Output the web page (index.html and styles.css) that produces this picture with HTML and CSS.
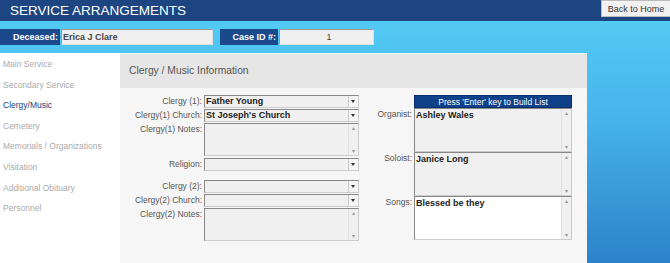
FILE: index.html
```html
<!DOCTYPE html>
<html lang="en">
<head>
    <meta charset="UTF-8">
    <meta name="viewport" content="width=device-width, initial-scale=1.0">
    <title>Service Arrangements</title>
    <link rel="stylesheet" href="styles.css">
</head>
<body>
    <header class="topbar">
        <h1>SERVICE ARRANGEMENTS</h1>
        <button class="home-btn">Back to Home</button>
    </header>
    <div class="page">
        <div class="case-bar">
            <span class="tag">Deceased:</span>
            <span class="field name-field">Erica J Clare</span>
            <span class="tag case-tag">Case ID #:</span>
            <span class="field id-field">1</span>
        </div>
        <div class="body">
            <nav class="sidenav">
                <a>Main Service</a>
                <a>Secondary Service</a>
                <a class="active">Clergy/Music</a>
                <a>Cemetery</a>
                <a>Memorials / Organizations</a>
                <a>Visitation</a>
                <a>Additional Obituary</a>
                <a>Personnel</a>
            </nav>
            <section class="panel">
                <div class="panel-head">Clergy / Music Information</div>
                <div class="panel-body">
                    <div class="form-grid left">
                        <label>Clergy (1):</label>
                        <div class="select"><span>Father Young</span><i class="arrow"></i></div>
                        <label>Clergy(1) Church:</label>
                        <div class="select"><span>St Joseph's Church</span><i class="arrow"></i></div>
                        <label>Clergy(1) Notes:</label>
                        <div class="textbox short"><span></span><i class="scroll"><b>&#9652;</b><b>&#9662;</b></i></div>
                        <label class="spaced">Religion:</label>
                        <div class="select spaced"><span></span><i class="arrow"></i></div>
                        <label class="gap">Clergy (2):</label>
                        <div class="select gap"><span></span><i class="arrow"></i></div>
                        <label>Clergy(2) Church:</label>
                        <div class="select"><span></span><i class="arrow"></i></div>
                        <label>Clergy(2) Notes:</label>
                        <div class="textbox short"><span></span><i class="scroll"><b>&#9652;</b><b>&#9662;</b></i></div>
                    </div>
                    <div class="form-grid right">
                        <span></span>
                        <div class="list-head">Press 'Enter' key to Build List</div>
                        <label>Organist:</label>
                        <div class="textbox tall"><span>Ashley Wales</span><i class="scroll"><b>&#9652;</b><b>&#9662;</b></i></div>
                        <label>Soloist:</label>
                        <div class="textbox tall"><span>Janice Long</span><i class="scroll"><b>&#9652;</b><b>&#9662;</b></i></div>
                        <label>Songs:</label>
                        <div class="textbox tall white"><span>Blessed be they</span><i class="scroll"><b>&#9652;</b><b>&#9662;</b></i></div>
                    </div>
                </div>
            </section>
        </div>
    </div>
</body>
</html>
```

FILE: styles.css
```css
body {
    margin: 0;
    font-family: "Liberation Sans", Arial, sans-serif;
    background: #2f86cc;
    overflow: hidden;
}
.topbar {
    display: flex;
    justify-content: space-between;
    align-items: flex-start;
    height: 21px;
    background: #1c4582;
}
.topbar h1 {
    margin: 0;
    padding: 2px 0 0 10px;
    font-size: 13.5px;
    font-weight: normal;
    color: #fff;
    line-height: 17px;
}
.home-btn {
    width: 70px;
    height: 17px;
    padding: 0;
    margin-right: -1px;
    border: 1px solid #bbb;
    background: #f2f2f2;
    font-family: inherit;
    font-size: 9px;
    color: #333;
}
.page {
    height: 242px;
    background: linear-gradient(to bottom, #53caf4 0%, #46b4eb 40%, #2d82c9 100%);
}
.case-bar {
    display: flex;
    align-items: center;
    height: 32px;
}
.tag {
    height: 16px;
    line-height: 16px;
    padding: 0 2px 0 4px;
    background: #1a4a8c;
    color: #fff;
    font-weight: bold;
    font-size: 9px;
    width: 54px;
    text-align: right;
}
.case-tag {
    margin-left: 7px;
    width: 52px;
}
.field {
    box-sizing: border-box;
    height: 16px;
    line-height: 14px;
    margin-left: 1px;
    padding: 0 1px;
    background: #f0f0f0;
    border: 1px solid #999;
    border-right-color: #ddd;
    border-bottom-color: #ddd;
    font-size: 9px;
    font-weight: bold;
    color: #444;
}
.name-field {
    width: 152px;
}
.id-field {
    width: 95px;
    text-align: center;
    padding-left: 6px;
    font-weight: normal;
}
.body {
    display: flex;
    height: 210px;
}
.sidenav {
    width: 120px;
    background: #fff;
    padding-top: 1px;
    display: flex;
    flex-direction: column;
}
.sidenav a {
    height: 20.6px;
    line-height: 20px;
    padding-left: 3px;
    font-size: 8.5px;
    color: #aaa;
}
.sidenav a.active {
    color: #1d3f7a;
}
.panel {
    width: 467px;
    background: #f6f6f6;
    border-top: 1px solid #fafafa;
}
.panel-head {
    height: 34px;
    line-height: 34px;
    padding-left: 9px;
    background: #e6e6e6;
    font-size: 10.3px;
    color: #555;
}
.panel-body {
    display: flex;
    padding-top: 7px;
}
.form-grid {
    display: grid;
    align-content: start;
    row-gap: 1px;
    column-gap: 2px;
}
.form-grid.left {
    grid-template-columns: 82px 155px;
}
.form-grid.right {
    grid-template-columns: 40px 158px;
    margin-left: 13px;
    row-gap: 0;
}
.form-grid label {
    text-align: right;
    font-size: 8.5px;
    color: #555;
    line-height: 13px;
}
.select {
    display: flex;
    box-sizing: border-box;
    height: 13px;
    border: 1px solid #888;
    border-right-color: #ccc;
    border-bottom-color: #ccc;
    background: #f0f0f0;
}
.select span,
.textbox span {
    flex: 1;
    padding-left: 1px;
    font-size: 9px;
    font-weight: bold;
    color: #222;
    line-height: 11px;
}
.arrow {
    position: relative;
    width: 9px;
    border-left: 1px solid #ccc;
    background: #f5f5f5;
}
.arrow::after {
    content: "";
    position: absolute;
    left: 2px;
    top: 4px;
    border-left: 2.5px solid transparent;
    border-right: 2.5px solid transparent;
    border-top: 3px solid #333;
}
.textbox {
    display: flex;
    box-sizing: border-box;
    border: 1px solid #888;
    border-right-color: #ccc;
    border-bottom-color: #ccc;
    background: #f0f0f0;
}
.textbox.short {
    height: 33px;
}
.textbox.tall {
    height: 44px;
}
.textbox.white {
    background: #fff;
}
.textbox span {
    line-height: 12px;
}
.scroll {
    display: flex;
    flex-direction: column;
    justify-content: space-between;
    width: 9px;
    background: #f0f0f0;
    border-left: 1px solid #e2e2e2;
    font-style: normal;
}
.scroll b {
    font-size: 6px;
    line-height: 8px;
    color: #999;
    text-align: center;
    font-weight: normal;
}
.spaced {
    margin-top: 1px;
}
.gap {
    margin-top: 8px;
}
.list-head {
    height: 13px;
    line-height: 13px;
    background: #0f4189;
    color: #fff;
    text-align: center;
    font-size: 8.5px;
    border: 1px solid #0a3070;
    box-sizing: border-box;
}
```
